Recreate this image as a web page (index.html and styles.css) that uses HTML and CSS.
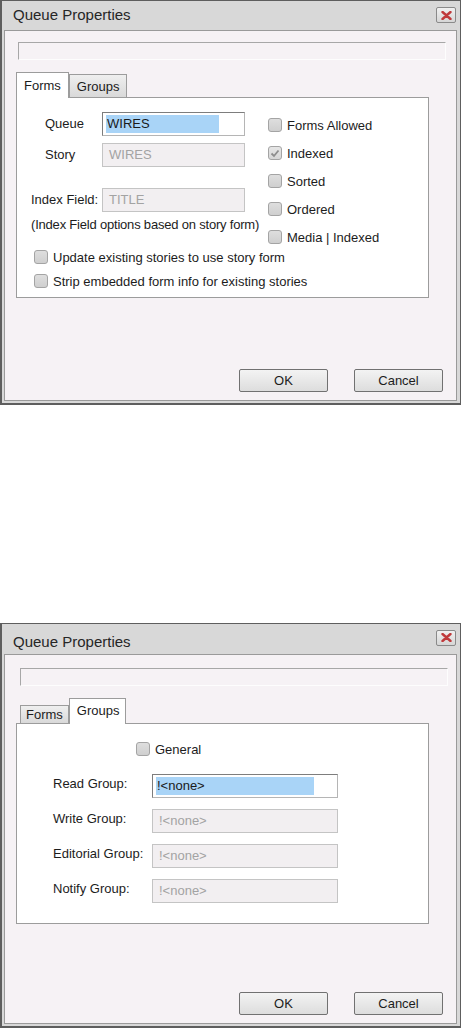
FILE: index.html
```html
<!DOCTYPE html>
<html lang="en">
<head>
  <meta charset="UTF-8" />
  <meta name="viewport" content="width=device-width, initial-scale=1.0"/>
  <title>Queue Properties</title>
  <link rel="stylesheet" href="styles.css">
</head>
<body>

  <!-- Forms tab open -->
  <div class="dialog">
    <div class="titlebar">
      <span class="title">Queue Properties</span>
      <button class="close-btn" aria-label="Close">
        <svg width="11" height="9" viewBox="0 0 11 9"><path d="M1.5 1 L9.5 8 M9.5 1 L1.5 8" stroke="#c0393b" stroke-width="2.4" stroke-linecap="round"/></svg>
      </button>
    </div>
    <div class="dialog-body">
      <div class="statusbar"></div>

      <div class="tabs">
        <div class="tab active">Forms</div>
        <div class="tab">Groups</div>
      </div>

      <div class="tab-panel">
        <div class="forms-layout">
          <div class="forms-fields">
            <div class="field-row">
              <span class="field-label indent">Queue</span>
              <div class="input"><span class="selected">WIRES</span></div>
            </div>
            <div class="field-row">
              <span class="field-label indent">Story</span>
              <div class="input disabled">WIRES</div>
            </div>
            <div class="field-row index-row">
              <span class="field-label">Index Field:</span>
              <div class="input disabled">TITLE</div>
            </div>
            <div class="hint">(Index Field options based on story form)</div>
          </div>

          <div class="forms-flags">
            <label class="check"><span class="box"></span>Forms Allowed</label>
            <label class="check"><span class="box checked">
              <svg width="10" height="9" viewBox="0 0 10 9"><path d="M1.5 4.5 L4 7 L8.5 1.5" fill="none" stroke="#8d8d8d" stroke-width="1.8"/></svg>
            </span>Indexed</label>
            <label class="check"><span class="box"></span>Sorted</label>
            <label class="check"><span class="box"></span>Ordered</label>
            <label class="check"><span class="box"></span>Media | Indexed</label>
          </div>
        </div>

        <div class="forms-options">
          <label class="check"><span class="box"></span>Update existing stories to use story form</label>
          <label class="check"><span class="box"></span>Strip embedded form info for existing stories</label>
        </div>
      </div>

      <div class="actions">
        <button class="btn">OK</button>
        <button class="btn">Cancel</button>
      </div>
    </div>
  </div>

  <!-- Groups tab open -->
  <div class="dialog second">
    <div class="titlebar">
      <span class="title">Queue Properties</span>
      <button class="close-btn" aria-label="Close">
        <svg width="11" height="9" viewBox="0 0 11 9"><path d="M1.5 1 L9.5 8 M9.5 1 L1.5 8" stroke="#c0393b" stroke-width="2.4" stroke-linecap="round"/></svg>
      </button>
    </div>
    <div class="dialog-body">
      <div class="statusbar"></div>

      <div class="tabs">
        <div class="tab">Forms</div>
        <div class="tab active">Groups</div>
      </div>

      <div class="tab-panel">
        <label class="check general"><span class="box"></span>General</label>

        <div class="group-rows">
          <div class="group-row">
            <span class="group-label">Read Group:</span>
            <div class="input wide"><span class="selected long">!&lt;none&gt;</span></div>
          </div>
          <div class="group-row">
            <span class="group-label">Write Group:</span>
            <div class="input wide disabled">!&lt;none&gt;</div>
          </div>
          <div class="group-row">
            <span class="group-label">Editorial Group:</span>
            <div class="input wide disabled">!&lt;none&gt;</div>
          </div>
          <div class="group-row">
            <span class="group-label">Notify Group:</span>
            <div class="input wide disabled">!&lt;none&gt;</div>
          </div>
        </div>
      </div>

      <div class="actions">
        <button class="btn">OK</button>
        <button class="btn">Cancel</button>
      </div>
    </div>
  </div>

</body>
</html>
```

FILE: styles.css
```css
body {
  margin: 0;
  background: #fff;
  font-family: 'Liberation Sans', Arial, sans-serif;
  font-size: 13px;
  color: #1c1c1c;
}

/* window frame */
.dialog {
  width: 461px;
  height: 405px;
  box-sizing: border-box;
  border: 1px solid #5e5e5e;
  border-left-width: 2px;
  border-bottom-width: 2px;
  background: #d8d8d8;
  display: flex;
  flex-direction: column;
}

.dialog.second {
  margin-top: 218px;
}

.titlebar {
  height: 29px;
  flex-shrink: 0;
  display: flex;
  align-items: center;
  justify-content: space-between;
  padding: 0 4px 0 11px;
}

.second .titlebar {
  height: 30px;
}

.title {
  font-size: 15px;
  color: #262626;
  margin-top: -3px;
}

.second .title {
  margin-top: 5px;
}

.close-btn {
  width: 20px;
  height: 16px;
  margin-top: -1px;
  padding: 0;
  border: 1px solid #8a8a8a;
  border-radius: 2px;
  background: linear-gradient(#f0f0f0, #d6d6d6);
  display: flex;
  align-items: center;
  justify-content: center;
}

.second .close-btn {
  margin-top: -3px;
}

.dialog-body {
  flex: 1;
  margin: 0 3px 2px 2px;
  border: 1px solid #9a9a9a;
  background: #f6f2f5;
  display: flex;
  flex-direction: column;
}

.statusbar {
  margin: 11px 0 0 13px;
  width: 428px;
  height: 18px;
  box-sizing: border-box;
  border-top: 1px solid #a7a7a7;
  border-left: 1px solid #a7a7a7;
  border-right: 1px solid #fdfdfd;
  border-bottom: 1px solid #fdfdfd;
}

.second .statusbar {
  margin-top: 13px;
  margin-left: 15px;
}

/* tabs */
.tabs {
  display: flex;
  align-items: flex-end;
  margin: 12px 0 0 11px;
  height: 25px;
  position: relative;
  z-index: 1;
}

.tab {
  height: 23px;
  box-sizing: border-box;
  padding: 4px 7px 0;
  border: 1px solid #9c9c9c;
  border-bottom: none;
  background: linear-gradient(#efefef, #d9d9d9);
  white-space: nowrap;
}

.tab.active {
  height: 26px;
  margin-bottom: -1px;
  padding-top: 5px;
  background: #fff;
}

.second .tab {
  height: 18px;
  padding-top: 1px;
  margin-left: 4px;
  padding-left: 5px;
  padding-right: 5px;
}

.second .tab.active {
  height: 26px;
  padding-top: 4px;
  margin-left: 0;
  padding-left: 7px;
  padding-right: 6px;
}

.tab-panel {
  margin-left: 11px;
  width: 413px;
  height: 201px;
  box-sizing: border-box;
  border: 1px solid #9c9c9c;
  background: #fff;
}

/* Forms panel */
.forms-layout {
  display: flex;
}

.forms-fields {
  width: 251px;
  box-sizing: border-box;
  padding: 14px 0 0 14px;
}

.field-row {
  display: flex;
  align-items: center;
  height: 24px;
  margin-bottom: 7px;
}

.field-row.index-row {
  margin-top: 21px;
  margin-bottom: 0;
}

.field-label {
  width: 71px;
  flex-shrink: 0;
  box-sizing: border-box;
  margin-top: -2px;
  white-space: nowrap;
}

.field-label.indent {
  padding-left: 14px;
}

.input {
  width: 143px;
  height: 24px;
  box-sizing: border-box;
  border: 1px solid #7d7d7d;
  border-bottom-color: #b5b5b5;
  border-right-color: #b5b5b5;
  background: #fff;
  padding: 2px 3px;
  line-height: 18px;
  color: #1c1c1c;
}

.input.disabled {
  background: #f2eff1;
  border-color: #c4c4c4;
  color: #a3a3a3;
  padding-left: 6px;
}

.selected {
  display: inline-block;
  width: 112px;
  padding-left: 1px;
  background: #a9d4f7;
  color: #1a1a1a;
}

.hint {
  margin-top: 6px;
  line-height: 14px;
  letter-spacing: -0.2px;
  white-space: nowrap;
}

.forms-flags {
  display: flex;
  flex-direction: column;
  gap: 8px;
  padding-top: 17px;
}

.forms-options {
  display: flex;
  flex-direction: column;
  gap: 4px;
  padding-left: 17px;
}

/* checkboxes */
.check {
  display: flex;
  align-items: center;
  gap: 5px;
  height: 20px;
  white-space: nowrap;
}

.box {
  width: 14px;
  height: 14px;
  flex-shrink: 0;
  box-sizing: border-box;
  border: 1px solid #a4a4a4;
  border-radius: 3px;
  background: linear-gradient(#dedede, #cfcfcf);
  display: flex;
  align-items: center;
  justify-content: center;
}

.box.checked {
  background: linear-gradient(#e6e6e6, #d6d6d6);
}

/* Groups panel */
.check.general {
  margin: 15px 0 0 119px;
}

.group-rows {
  display: flex;
  flex-direction: column;
  gap: 11px;
  margin-top: 15px;
  padding-left: 36px;
}

.group-row {
  display: flex;
  align-items: center;
  height: 24px;
}

.group-label {
  width: 99px;
  flex-shrink: 0;
  margin-top: -5px;
  white-space: nowrap;
}

.input.wide {
  width: 186px;
}

.selected.long {
  width: 157px;
}

/* buttons */
.actions {
  margin-top: auto;
  display: flex;
  justify-content: flex-end;
  gap: 26px;
  padding: 0 13px 8px 0;
}

.btn {
  width: 89px;
  height: 23px;
  padding: 0;
  border: 1px solid #717171;
  border-radius: 2px;
  background: linear-gradient(#f3f3f3, #dddddd);
  font-family: 'Liberation Sans', Arial, sans-serif;
  font-size: 13px;
  color: #1c1c1c;
}
```
